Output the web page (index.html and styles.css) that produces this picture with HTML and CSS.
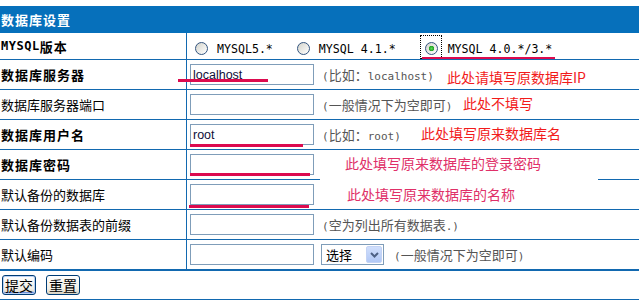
FILE: index.html
```html
<!DOCTYPE html>
<html lang="zh-CN">
<head>
  <meta charset="UTF-8">
  <title>数据库设置</title>
  <link rel="stylesheet" href="styles.css">
</head>
<body>
  <div class="page">
    <div class="head">数据库设置</div>

    <div class="row row-first">
      <div class="lbl bold"><span class="en">MYSQL</span>版本</div>
      <div class="val ver">
        <label class="opt"><input type="radio" name="ver"><span class="en">MYSQL5.*</span></label>
        <label class="opt"><input type="radio" name="ver"><span class="en">MYSQL 4.1.*</span></label>
        <label class="opt"><span class="focus"><input type="radio" name="ver" checked></span><span class="en">MYSQL 4.0.*/3.*</span></label>
      </div>
    </div>

    <div class="row">
      <div class="lbl bold">数据库服务器</div>
      <div class="val">
        <input class="txt" type="text" value="localhost">
        <span class="tip"><span class="en">(</span>比如：<span class="en">localhost)</span></span>
      </div>
    </div>

    <div class="row">
      <div class="lbl">数据库服务器端口</div>
      <div class="val">
        <input class="txt" type="text">
        <span class="tip"><span class="en">(</span>一般情况下为空即可<span class="en">)</span></span>
      </div>
    </div>

    <div class="row">
      <div class="lbl bold">数据库用户名</div>
      <div class="val">
        <input class="txt" type="text" value="root">
        <span class="tip"><span class="en">(</span>比如：<span class="en">root)</span></span>
      </div>
    </div>

    <div class="row">
      <div class="lbl bold">数据库密码</div>
      <div class="val">
        <input class="txt" type="password">
      </div>
    </div>

    <div class="row">
      <div class="lbl">默认备份的数据库</div>
      <div class="val">
        <input class="txt" type="text">
      </div>
    </div>

    <div class="row">
      <div class="lbl">默认备份数据表的前缀</div>
      <div class="val">
        <input class="txt" type="text">
        <span class="tip"><span class="en">(</span>空为列出所有数据表<span class="en">.)</span></span>
      </div>
    </div>

    <div class="row row-last">
      <div class="lbl">默认编码</div>
      <div class="val">
        <input class="txt" type="text">
        <span class="sel">
          <span class="sel-text">选择</span>
          <span class="sel-btn">
            <svg width="9" height="6" viewBox="0 0 9 6"><path d="M1 1l3.5 3.5L8 1" fill="none" stroke="#4d6185" stroke-width="2"/></svg>
          </span>
        </span>
        <span class="tip tip-sel"><span class="en">(</span>一般情况下为空即可<span class="en">)</span></span>
      </div>
    </div>

    <div class="actions">
      <button class="btn btn-def" type="submit">提交</button>
      <button class="btn" type="reset">重置</button>
    </div>

    <!-- annotations pasted over the screenshot -->
    <div class="patch"></div>
    <span class="uline u-ver"></span>
    <span class="uline u-host"></span>
    <span class="uline u-user"></span>
    <span class="uline u-pass"></span>
    <span class="uline u-db"></span>

    <span class="anno a-host">此处请填写原数据库IP</span>
    <span class="anno a-port">此处不填写</span>
    <span class="anno a-user">此处填写原来数据库名</span>
    <span class="anno pink a-pass">此处填写原来数据库的登录密码</span>
    <span class="anno pink a-db">此处填写原来数据库的名称</span>
  </div>
</body>
</html>
```

FILE: styles.css
```css
body {
  margin: 0;
  font-family: "Noto Sans CJK SC", sans-serif;
  font-size: 13px;
  color: #000;
  background: #fff;
}
.page {
  position: relative;
  padding-top: 6px;
}
.en {
  font-family: "DejaVu Sans Mono", monospace;
}
.head {
  height: 27px;
  background: #0670bb;
  color: #fff;
  font-weight: bold;
  font-size: 13px;
  letter-spacing: 1px;
  padding-left: 1px;
  display: flex;
  align-items: center;
}
.row {
  display: grid;
  grid-template-columns: 187px 1fr;
  height: 30px;
  box-sizing: border-box;
  border-bottom: 1px solid #1269b0;
}
.row-first { height: 27px; }
.row-last {
  height: 31px;
  border-bottom-width: 2px;
}
.lbl {
  border-right: 1px solid #1269b0;
  padding-left: 1px;
  display: flex;
  align-items: center;
  white-space: nowrap;
}
.lbl.bold {
  font-weight: bold;
  letter-spacing: 1px;
}
.lbl .en {
  font-size: 12px;
  letter-spacing: 0.5px;
}
.val {
  display: flex;
  align-items: center;
  padding-left: 3px;
  white-space: nowrap;
}

/* version radios */
.ver {
  padding-left: 8px;
  padding-top: 5px;
}
.opt {
  display: flex;
  align-items: center;
  margin-right: 24px;
}
.opt .en {
  font-size: 11.6px;
}
.opt input {
  -webkit-appearance: none;
  appearance: none;
  width: 13px;
  height: 13px;
  margin: 0 9px 0 0;
  border: 1px solid #34557f;
  border-radius: 50%;
  background: linear-gradient(135deg, #d4d4cc, #fff);
  box-sizing: border-box;
}
.opt input:checked {
  background: radial-gradient(circle, #5bdc5b 0, #21a121 2.5px, transparent 3px),
              linear-gradient(135deg, #d4d4cc, #fff);
}
.focus {
  display: flex;
  align-self: flex-start;
  margin-top: -4px;
  height: 24px;
  box-sizing: border-box;
  border: 1px dotted #000;
  padding: 6px 3px 0 4px;
  margin-right: 6px;
}
.focus input {
  margin: 0;
}

.txt {
  width: 124px;
  height: 21px;
  box-sizing: border-box;
  border: 1px solid #7f9db9;
  margin: 0 8px 0 0;
  padding: 0 2px;
  font-family: "Liberation Sans", sans-serif;
  font-size: 12.5px;
  color: #10103a;
  outline: none;
}
.tip {
  color: #555;
  font-size: 13px;
}
.tip .en {
  font-size: 11px;
}
.tip-sel {
  margin-left: 10px;
}

/* fake select */
.sel {
  display: flex;
  align-items: center;
  justify-content: space-between;
  width: 63px;
  height: 21px;
  box-sizing: border-box;
  border: 1px solid #7f9db9;
  padding: 1px;
  margin-left: -1px;
}
.sel-text {
  padding-left: 3px;
  font-size: 13px;
}
.sel-btn {
  width: 16px;
  height: 17px;
  box-sizing: border-box;
  border: 1px solid #c3d3f5;
  border-radius: 2px;
  background: linear-gradient(#d0dffc, #b1c8f6);
  display: flex;
  align-items: center;
  justify-content: center;
}

.actions {
  display: flex;
  align-items: center;
  gap: 10px;
  height: 29px;
  box-sizing: border-box;
  padding-left: 2px;
  border-bottom: 1px solid #1269b0;
}
.btn {
  width: 34px;
  height: 20px;
  padding: 0;
  border: 1px solid #003c74;
  border-radius: 3px;
  background: linear-gradient(#fff, #f1efe6 70%, #d8d2c2);
  font-family: "Noto Sans CJK SC", sans-serif;
  font-size: 14px;
  line-height: 16px;
  color: #000;
}
.btn-def {
  box-shadow: inset 0 0 0 1px #b8d0f4, inset 0 -2px 0 #6f8fd9;
}

/* pasted annotations */
.patch {
  position: absolute;
  left: 320px;
  top: 151px;
  width: 278px;
  height: 56px;
  background: #fff;
}
.uline {
  position: absolute;
  height: 3px;
  background: #dc0b4f;
}
.u-ver { left: 422px; top: 57px; width: 133px; height: 2px; }
.u-host { left: 178px; top: 79px; width: 90px; }
.u-user { left: 190px; top: 144px; width: 113px; }
.u-pass { left: 190px; top: 173px; width: 120px; }
.u-db { left: 189px; top: 205px; width: 120px; }
.anno {
  position: absolute;
  font-size: 14px;
  line-height: 14px;
  color: #f21b1b;
  white-space: nowrap;
}
.anno.pink { color: #e03068; }
.a-host { left: 447px; top: 70px; }
.a-port { left: 463px; top: 96px; }
.a-user { left: 421px; top: 126px; }
.a-pass { left: 345px; top: 156px; }
.a-db { left: 347px; top: 187px; }
```
